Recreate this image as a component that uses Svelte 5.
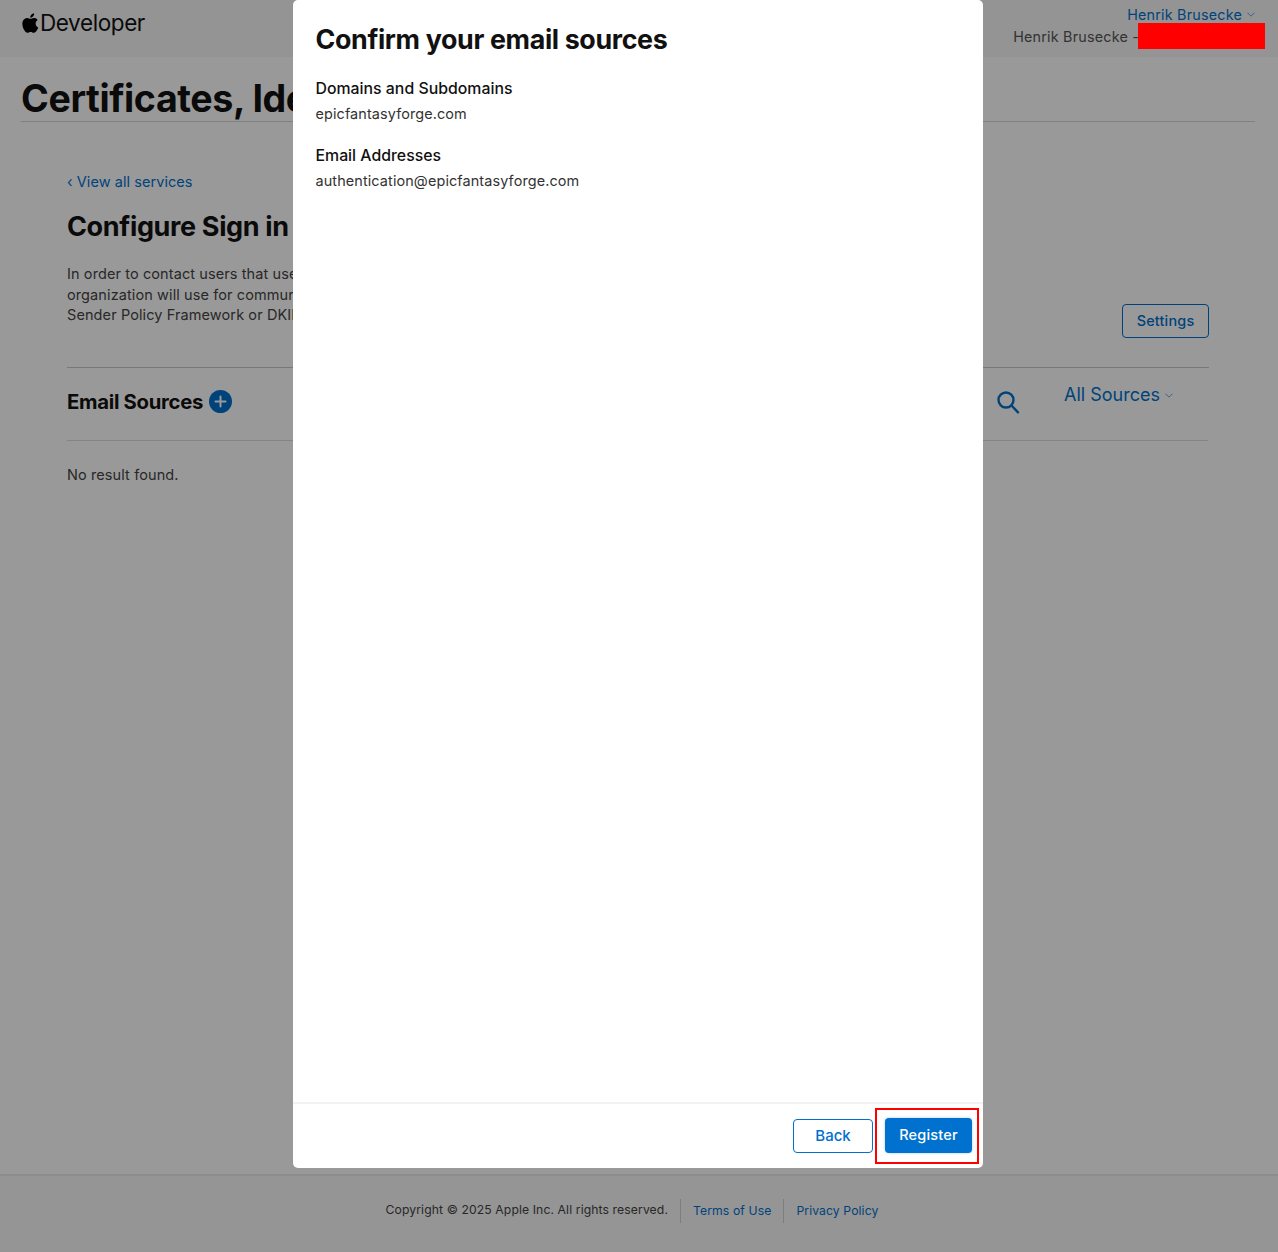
<script>
	const domains = ['epicfantasyforge.com']
	const emails = ['authentication@epicfantasyforge.com']
</script>

<div class="page">
	<header class="topbar">
		<a class="logo" href="#top">
			<svg viewBox="3.6 1.8 17.2 20.4" width="17" height="20" aria-hidden="true">
				<path fill="#000" d="M18.71 19.5c-.83 1.24-1.71 2.45-3.05 2.47-1.34.03-1.77-.79-3.29-.79-1.53 0-2 .77-3.27.82-1.31.05-2.3-1.32-3.14-2.53C4.25 17 2.94 12.45 4.7 9.39c.87-1.52 2.43-2.48 4.12-2.51 1.28-.02 2.5.87 3.29.87.78 0 2.26-1.07 3.8-.91.65.03 2.47.26 3.64 1.98-.09.06-2.17 1.28-2.15 3.81.03 3.02 2.65 4.03 2.68 4.04-.03.07-.42 1.44-1.38 2.83M13 3.5c.73-.83 1.94-1.46 2.94-1.5.13 1.17-.34 2.35-1.04 3.19-.69.85-1.83 1.51-2.95 1.42-.15-1.15.41-2.35 1.05-3.11z"/>
			</svg>
			<span>Developer</span>
		</a>
		<div class="account">
			<a class="account-name" href="#top">Henrik Brusecke
				<svg class="chev" viewBox="0 0 8 5" width="8" height="5" aria-hidden="true"><path d="M.5.7 4 4.2 7.5.7" /></svg>
			</a>
			<div class="team"><span class="team-name">Henrik Brusecke -</span><span class="redacted"></span></div>
		</div>
	</header>

	<div class="title-wrap">
		<h1>Certificates, Identifiers &amp; Profiles</h1>
	</div>

	<main class="content">
		<a class="back-link" href="#top">‹ View all services</a>
		<h2>Configure Sign in with Apple for Email Communication</h2>
		<div class="intro">
			<p>In order to contact users that use Sign in with Apple, you must register the domains that your<br />organization will use for communication. Sources must comply with<br />Sender Policy Framework or DKIM.</p>
			<button class="settings">Settings</button>
		</div>
		<div class="sources-bar">
			<div class="sources-title">
				<h3>Email Sources</h3>
				<span class="add">
					<svg viewBox="0 0 23 23" width="23" height="23" aria-hidden="true">
						<circle cx="11.5" cy="11.5" r="11.5" fill="#0071ce" />
						<path d="M11.5 6.5v10M6.5 11.5h10" stroke="#fff" stroke-width="2" stroke-linecap="round" />
					</svg>
				</span>
			</div>
			<div class="sources-tools">
				<svg class="search" viewBox="0 0 24 24" width="24" height="24" aria-hidden="true">
					<circle cx="10" cy="10" r="7.5" />
					<path d="M15.5 15.5 22 22.3" />
				</svg>
				<a class="filter" href="#top">All Sources
					<svg class="chev" viewBox="0 0 8 5" width="8" height="5" aria-hidden="true"><path d="M.5.7 4 4.2 7.5.7" /></svg>
				</a>
			</div>
		</div>
		<p class="empty">No result found.</p>
	</main>

	<footer class="footer">
		<span class="copyright">Copyright © 2025 Apple Inc. All rights reserved.</span>
		<a href="#top">Terms of Use</a>
		<a href="#top">Privacy Policy</a>
	</footer>
</div>

<div class="backdrop"></div>

<div class="modal">
	<div class="modal-body">
		<h2>Confirm your email sources</h2>
		<section>
			<h4>Domains and Subdomains</h4>
			{#each domains as domain}
				<p>{domain}</p>
			{/each}
		</section>
		<section>
			<h4>Email Addresses</h4>
			{#each emails as email}
				<p>{email}</p>
			{/each}
		</section>
	</div>
	<div class="modal-footer">
		<button class="btn-back">Back</button>
		<span class="highlight">
			<button class="btn-register">Register</button>
		</span>
	</div>
</div>

<style>
	:global(body) {
		background: #fff;
		font-family: Inter, "Liberation Sans", sans-serif;
		color: #1d1d1f;
	}

	a {
		color: #0071ce;
		text-decoration: none;
	}

	.page {
		height: 1252px;
		display: flex;
		flex-direction: column;
		overflow: hidden;
	}

	.topbar {
		height: 57px;
		box-sizing: border-box;
		flex: none;
		display: flex;
		justify-content: space-between;
		background: #f7f7f7;
		padding: 0 13px 0 22px;
	}

	.logo {
		display: flex;
		align-items: center;
		height: 45px;
		color: #111;
		font-size: 22.5px;
		letter-spacing: -0.4px;
	}

	.logo span {
		margin-left: 1px;
	}

	.account {
		display: flex;
		flex-direction: column;
		align-items: flex-end;
		font-size: 14.35px;
		letter-spacing: 0.2px;
	}

	.account-name {
		margin-top: 6px;
		margin-right: 10px;
		line-height: 17px;
		display: flex;
		align-items: center;
		gap: 5px;
	}

	.team {
		display: flex;
		align-items: flex-start;
		color: #555;
		line-height: 26px;
	}

	.team-name {
		margin-top: 1px;
		margin-right: 1px;
	}

	.redacted {
		display: inline-block;
		width: 127px;
		height: 26px;
		background: #f00;
		margin-left: -2px;
		position: relative;
		z-index: 5;
	}

	.chev {
		fill: none;
		stroke: #6e9fd0;
		stroke-width: 1;
	}

	.title-wrap {
		margin: 0 23px 0 21px;
		border-bottom: 1px solid #d6d6d6;
		height: 64px;
		flex: none;
	}

	h1 {
		margin: 0;
		font-size: 37.6px;
		font-weight: 700;
		line-height: 84px;
		letter-spacing: -0.4px;
		color: #111;
		white-space: nowrap;
	}

	.content {
		flex: 1;
		padding: 51px 69px 0 67px;
	}

	.back-link {
		display: block;
		font-size: 14.5px;
		line-height: 18px;
		letter-spacing: 0.06px;
	}

	.content h2 {
		margin: 18px 0 0;
		font-size: 27px;
		font-weight: 700;
		line-height: 36px;
		letter-spacing: -0.35px;
		color: #111;
		white-space: nowrap;
	}

	.intro {
		display: flex;
		justify-content: space-between;
		align-items: flex-start;
		margin-top: 20px;
		height: 102px;
		border-bottom: 1px solid #c8c8c8;
	}

	.intro p {
		margin: -1px 0 0;
		font-size: 14.5px;
		line-height: 20.7px;
		color: #444;
		letter-spacing: 0.1px;
	}

	.settings {
		width: 87px;
		height: 34px;
		margin-top: 39px;
		box-sizing: border-box;
		border: 1px solid #0071ce;
		border-radius: 4px;
		background: #fff;
		color: #0071ce;
		font: 500 14.4px Inter, sans-serif;
		letter-spacing: 0.2px;
		padding: 0 0 2px;
	}

	.sources-bar {
		display: flex;
		justify-content: space-between;
		height: 72px;
		border-bottom: 1px solid #dcdcdc;
		margin-right: 1px;
	}

	.sources-title {
		display: flex;
		align-items: center;
		gap: 6px;
		height: 66px;
	}

	h3 {
		margin: 0;
		font-size: 20.3px;
		font-weight: 700;
		letter-spacing: -0.3px;
		color: #111;
	}

	.add {
		display: flex;
	}

	.sources-tools {
		display: flex;
		align-items: flex-start;
		padding-right: 35px;
	}

	.search {
		margin-top: 22px;
		margin-right: 44px;
		fill: none;
		stroke: #0071ce;
		stroke-width: 2.4;
		stroke-linecap: round;
	}

	.filter {
		margin-top: 16px;
		font-size: 18px;
		line-height: 22px;
		display: flex;
		align-items: center;
		gap: 5px;
	}

	.empty {
		margin: 25px 0 0;
		font-size: 14.5px;
		line-height: 18px;
		color: #444;
		letter-spacing: 0.1px;
	}

	.footer {
		flex: none;
		height: 78px;
		box-sizing: border-box;
		border-top: 2px solid #ebebeb;
		background: #f8f8f8;
		display: flex;
		justify-content: center;
		align-items: flex-start;
		padding: 22px 14px 0 0;
		font-size: 12.2px;
	}

	.copyright {
		color: #444;
		line-height: 24px;
		padding-right: 12px;
		height: 24px;
		letter-spacing: 0.1px;
	}

	.footer a {
		border-left: 1px solid #d0d0d0;
		padding: 0 12px;
		line-height: 24px;
		margin-top: 1px;
		letter-spacing: 0.1px;
	}

	.footer a:last-child {
		padding-right: 0;
	}

	.backdrop {
		position: fixed;
		inset: 0;
		background: rgba(0, 0, 0, 0.4);
	}

	.modal {
		position: fixed;
		top: 0;
		left: 293px;
		width: 690px;
		height: 1168px;
		background: #fff;
		border-radius: 5px;
		display: flex;
		flex-direction: column;
	}

	.modal-body {
		flex: 1;
		padding: 19px 22.5px 0;
	}

	.modal-body h2 {
		margin: 0 0 20px;
		font-size: 26.8px;
		font-weight: 700;
		line-height: 40px;
		letter-spacing: -0.35px;
		color: #111;
	}

	.modal-body section {
		margin-bottom: 22px;
	}

	h4 {
		margin: 0;
		font-size: 15.85px;
		font-weight: 500;
		line-height: 20px;
		color: #111;
	}

	.modal-body p {
		margin: 5px 0 0;
		font-size: 14.45px;
		line-height: 20px;
		color: #333;
		letter-spacing: 0.1px;
	}

	.modal-footer {
		height: 66px;
		flex: none;
		box-sizing: border-box;
		border-top: 2px solid #f2f2f2;
		display: flex;
		align-items: flex-start;
		justify-content: flex-end;
		padding: 4px 4px 0 0;
	}

	.btn-back {
		width: 80px;
		height: 34px;
		margin-top: 11px;
		box-sizing: border-box;
		border: 1px solid #0071ce;
		border-radius: 4px;
		background: #fff;
		color: #0071ce;
		font: 500 15px Inter, sans-serif;
		padding: 0 0 2px;
	}

	.highlight {
		display: flex;
		box-sizing: border-box;
		width: 104px;
		height: 56px;
		border: 2px solid #f00;
		margin-left: 2px;
		padding: 8px 0 0 8px;
	}

	.btn-register {
		width: 87px;
		height: 35px;
		border: none;
		border-radius: 4px;
		background: #0071ce;
		color: #fff;
		font: 500 14.5px Inter, sans-serif;
		letter-spacing: 0.2px;
		padding: 0 0 2px;
		box-shadow: 0 0 3px rgba(0, 113, 206, 0.35);
	}
</style>
